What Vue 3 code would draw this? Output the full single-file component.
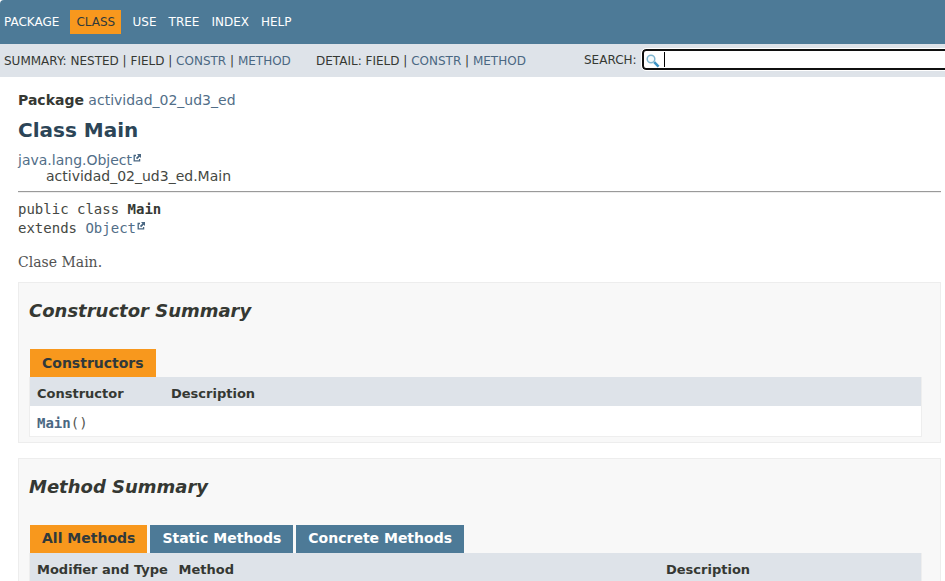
<script setup>
const iconPath = 'M3 1.5H1.2V6.8H6.6V5'
const arrowPath = 'M4 0H8V4L6.7 2.7L4.2 5.2L2.9 3.9L5.4 1.4Z'
const tabs = ['Static Methods', 'Concrete Methods']
</script>

<template>
  <div class="page">
    <nav class="top-nav">
      <ul>
        <li><a>PACKAGE</a></li>
        <li class="active">CLASS</li>
        <li><a>USE</a></li>
        <li><a>TREE</a></li>
        <li><a>INDEX</a></li>
        <li><a>HELP</a></li>
      </ul>
    </nav>
    <div class="sub-nav">
      <div class="summary">SUMMARY: NESTED | FIELD | <a>CONSTR</a> | <a>METHOD</a></div>
      <div class="detail">DETAIL: FIELD | <a>CONSTR</a> | <a>METHOD</a></div>
      <div class="search">
        <label>SEARCH:</label>
        <div class="search-box">
          <svg class="glass" width="14" height="14" viewBox="0 0 14 14">
            <path d="M8.2 8.2L12.6 12.6" stroke="#3b93c5" stroke-width="2.6" fill="none" />
            <circle cx="5" cy="5" r="3.8" stroke="#7fb6d0" stroke-width="1.5" fill="#f4fafc" />
          </svg>
          <span class="caret"></span>
        </div>
      </div>
    </div>
    <main>
      <div class="package"><b>Package</b> <a>actividad_02_ud3_ed</a></div>
      <h1>Class Main</h1>
      <div class="inheritance">
        <a>java.lang.Object<svg class="ext" viewBox="0 0 8 8"><path :d="iconPath" /><path class="arrow" :d="arrowPath" /></svg></a>
        <div class="child">actividad_02_ud3_ed.Main</div>
      </div>
      <hr />
      <div class="signature">
        <div>public class <b>Main</b></div>
        <div>extends <a>Object<svg class="ext" viewBox="0 0 8 8"><path :d="iconPath" /><path class="arrow" :d="arrowPath" /></svg></a></div>
      </div>
      <div class="block">Clase Main.</div>
      <section class="constructors">
        <h2>Constructor Summary</h2>
        <div class="tabs"><span class="tab selected">Constructors</span></div>
        <div class="table ctor-table">
          <div class="head">Constructor</div>
          <div class="head">Description</div>
          <div class="cell"><a><b>Main</b></a>()</div>
          <div class="cell"></div>
        </div>
      </section>
      <section class="methods">
        <h2>Method Summary</h2>
        <div class="tabs">
          <span class="tab selected">All Methods</span>
          <span v-for="t in tabs" :key="t" class="tab">{{ t }}</span>
        </div>
        <div class="table method-table">
          <div class="head">Modifier and Type</div>
          <div class="head">Method</div>
          <div class="head">Description</div>
        </div>
      </section>
    </main>
  </div>
</template>

<style>
body { background: #fff; }
</style>

<style scoped>
.page {
  height: 581px;
  overflow: hidden;
  color: #353833;
  font: 14px/16px "DejaVu Sans", sans-serif;
}
a { color: #4a6782; }
.top-nav {
  height: 44px;
  box-sizing: border-box;
  padding: 10px 0 0 4px;
  background: #4d7a97;
  border-top-left-radius: 4px;
  color: #fff;
  font-size: 12px;
}
.top-nav ul { display: flex; margin: 0; padding: 0; list-style: none; }
.top-nav li { line-height: 24px; margin-right: 12px; }
.top-nav li a { color: #fff; }
.top-nav li.active {
  margin: 0 11.4px 0 -1px;
  padding: 0 6px;
  background: #f8981d;
  color: #30393b;
}
.sub-nav {
  display: flex;
  height: 33px;
  box-sizing: border-box;
  padding-left: 4px;
  background: #dee3e9;
  font-size: 12px;
  line-height: 35px;
  white-space: nowrap;
}
.summary { width: 312px; flex: none; }
.detail { width: 268px; flex: none; }
.search { display: flex; flex: 1; line-height: 33px; min-width: 0; }
.search label { width: 58px; flex: none; }
.search-box {
  display: flex;
  flex: none;
  width: 320px;
  height: 21px;
  box-sizing: border-box;
  margin-top: 5px;
  padding: 3px 0 0 2px;
  border: 2px solid #101010;
  border-radius: 4px;
  outline: 1px solid #fff;
  background: #fff;
}
.glass { display: block; flex: none; }
.caret { width: 1px; height: 15px; margin: -2px 0 0 4px; background: #000; }
main { padding: 15px 4px 0 18px; }
.package { height: 26px; }
h1 { margin: 0; color: #2c4557; font-size: 20px; line-height: 24px; height: 34px; }
.inheritance { height: 39px; }
.inheritance a, .package a, .signature a { color: #526e88; }
.child { padding-left: 28px; color: #454843; }
.ext {
  width: 8px;
  height: 8px;
  margin-left: 1px;
  vertical-align: 3px;
  fill: none;
  stroke: #4a6782;
  stroke-width: 1.3;
}
.arrow { fill: #4a6782; stroke: none; }
hr {
  height: 0;
  margin: 0;
  border: 0;
  border-top: 1px solid #9a9a9a;
  border-bottom: 1px solid #eee;
}
.signature {
  height: 62px;
  padding-top: 7px;
  box-sizing: border-box;
  color: #454843;
  font: 14px/19px "DejaVu Sans Mono", monospace;
}
.signature > div { height: 19px; }
.signature b { color: #353833; }
.block { height: 28px; font: 14px/16px "DejaVu Serif", serif; color: #525252; margin-top: -1px; }
section {
  margin-bottom: 15px;
  box-sizing: border-box;
  border: 1px solid #ededed;
  background: #f8f8f8;
  padding: 17px 18px 0 10px;
}
.constructors { height: 161px; }
.methods { height: 220px; }
h2 { height: 49px; margin: 0; font-size: 18px; line-height: 22px; font-style: italic; }
.tabs { display: flex; gap: 3px; padding-left: 1px; }
.tab {
  height: 28px;
  padding: 0 12px;
  line-height: 28px;
  font-weight: bold;
  background: #4d7a97;
  color: #fff;
}
.methods .tab { line-height: 26px; }
.selected { background: #f8981d; color: #30393b; }
.table {
  display: grid;
  border: 1px solid #eee;
  border-top: 0;
  background: #fff;
}
.ctor-table { grid-template-columns: 134px 1fr; }
.method-table { grid-template-columns: 141.5px 487.5px 1fr; }
.head {
  height: 29px;
  box-sizing: border-box;
  padding: 9px 0 0 7px;
  background: #dee3e9;
  font-size: 13px;
  font-weight: bold;
}
.cell {
  height: 30px;
  box-sizing: border-box;
  padding: 9px 0 0 7px;
  color: #555853;
  font-family: "DejaVu Sans Mono", monospace;
}
</style>
